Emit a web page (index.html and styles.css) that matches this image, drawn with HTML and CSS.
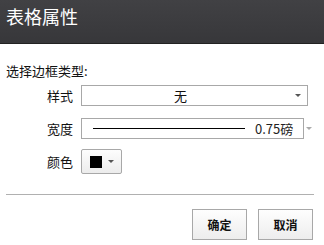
FILE: index.html
```html
<!DOCTYPE html>
<html lang="zh">
<head>
<meta charset="utf-8">
<link rel="stylesheet" href="styles.css">
</head>
<body>
<div class="dialog">
  <div class="titlebar">表格属性</div>
  <div class="content">
    <div class="section-label">选择边框类型:</div>
    <div class="form">
      <div class="row row-style">
        <div class="label">样式</div>
        <div class="select">
          <span class="select-text">无</span>
          <span class="caret"></span>
        </div>
      </div>
      <div class="row row-width">
        <div class="label">宽度</div>
        <div class="width-wrap">
          <div class="select width-select">
            <span class="line"></span>
            <span class="width-text">0.75磅</span>
          </div>
          <span class="caret caret-light"></span>
        </div>
      </div>
      <div class="row row-color">
        <div class="label">颜色</div>
        <div class="color-btn">
          <span class="swatch"></span>
          <span class="caret"></span>
        </div>
      </div>
    </div>
    <div class="separator"></div>
    <div class="buttons">
      <button class="btn">确定</button>
      <button class="btn">取消</button>
    </div>
  </div>
</div>
</body>
</html>
```
FILE: styles.css
```css
* { box-sizing: border-box; }
html, body { margin: 0; padding: 0; background: #fff; }
body {
  font-family: "Noto Sans CJK SC", "Liberation Sans", sans-serif;
  color: #111;
  width: 324px;
  height: 245px;
  overflow: hidden;
}
.titlebar {
  height: 44px;
  background: linear-gradient(#414144, #37373a);
  border-bottom: 1px solid #222;
  color: #fff;
  font-size: 18px;
  line-height: 22px;
  padding: 5px 0 0 6px;
}
.content {
  padding: 0 10px 0 6px;
}
.section-label {
  font-size: 13px;
  line-height: 17px;
  margin-top: 18px;
}
.form {
  display: flex;
  flex-direction: column;
  margin-top: 6px;
}
.row {
  display: flex;
  align-items: center;
}
.row-width { margin-top: 12px; }
.row-color { margin-top: 10px; }
.label {
  width: 67px;
  text-align: right;
  font-size: 13px;
  line-height: 17px;
  margin-right: 8px;
}
.select {
  height: 21px;
  border: 1px solid #a8a8a8;
  background: #fff;
  display: flex;
  align-items: center;
  position: relative;
}
.row-style .select {
  width: 227px;
}
.select-text {
  flex: 1;
  text-align: center;
  font-size: 13px;
  line-height: 17px;
  padding-right: 16px;
}
.caret {
  width: 0;
  height: 0;
  border-left: 3px solid transparent;
  border-right: 3px solid transparent;
  border-top: 3px solid #555;
  margin-right: 6px;
}
.caret-light {
  border-top-color: #aaa;
  margin: 0 0 0 2px;
}
.width-wrap {
  display: flex;
  align-items: center;
}
.width-select {
  width: 223px;
  padding-left: 11px;
}
.line {
  width: 152px;
  height: 1px;
  background: #000;
}
.width-text {
  font-size: 13px;
  line-height: 17px;
  color: #222;
  margin-left: 10px;
}
.color-btn {
  width: 41px;
  height: 25px;
  border: 1px solid #a8a8a8;
  border-radius: 2px;
  background: linear-gradient(#fdfdfd, #ececec);
  display: flex;
  align-items: center;
  padding-left: 8px;
}
.swatch {
  width: 12px;
  height: 12px;
  background: #000;
  margin-right: 6px;
}
.color-btn .caret { margin: 0; }
.separator {
  height: 1px;
  background: #b0b0b0;
  margin-top: 20px;
}
.buttons {
  display: flex;
  justify-content: flex-end;
  gap: 11px;
  margin-top: 14px;
  padding-right: 1px;
}
.btn {
  width: 55px;
  height: 31px;
  border: 1px solid #a8a8a8;
  background: linear-gradient(#fefefe, #ededed);
  font-family: "Noto Sans CJK SC", sans-serif;
  font-size: 12px;
  font-weight: bold;
  color: #111;
  padding: 0;
}
```
